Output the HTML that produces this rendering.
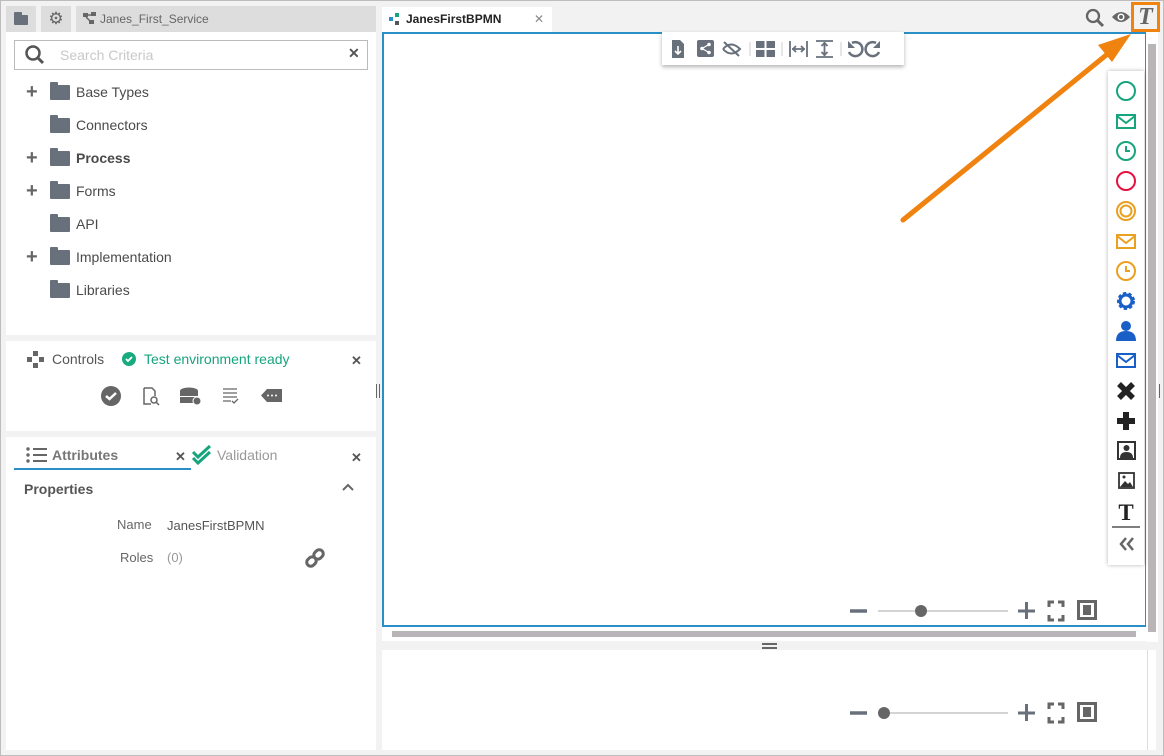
<!DOCTYPE html>
<html><head><style>
*{box-sizing:border-box;margin:0;padding:0}
body{width:1164px;height:756px;background:#f2f2f2;font-family:"Liberation Sans",sans-serif;position:relative;overflow:hidden}
.a{position:absolute}
.w{background:#fff}
.t{color:#555;font-size:14px}
.fold{position:absolute;width:20px;height:15px;background:#68707c;border-radius:1px}
.fold:before{content:"";position:absolute;top:-3px;left:0;width:8px;height:4px;background:#68707c;border-radius:1px 1px 0 0}
.plus{position:absolute;font-size:20px;color:#666;font-weight:bold;line-height:1}
.tree{position:absolute;left:76px;font-size:14px;color:#4a4a4a}
</style></head><body>
<div class="a" style="left:0;top:0;width:1164px;height:756px;border:1px solid #bdbdbd"></div>
<!-- left tabs -->
<div class="a" style="left:6px;top:6px;width:30px;height:26px;background:#ddd"></div>
<div class="fold" style="left:14px;top:15px;width:14px;height:10px"></div>
<div class="a" style="left:41px;top:6px;width:30px;height:26px;background:#ddd;text-align:center;font-size:17px;color:#666;line-height:26px">⚙</div>
<div class="a" style="left:76px;top:6px;width:300px;height:26px;background:#ddd;font-size:12px;color:#666;line-height:26px;padding-left:24px">Janes_First_Service</div>
<svg class="a" style="left:83px;top:12px" width="14" height="14"><rect x="0" y="1" width="5" height="4" fill="#666"/><rect x="8" y="0" width="5" height="4" fill="#666"/><rect x="6" y="8" width="5" height="4" fill="#666"/><path d="M5 3H8M3 5L7 9" stroke="#666" stroke-width="1.5"/></svg>
<!-- tree panel -->
<div class="a w" style="left:6px;top:32px;width:370px;height:303px"></div>
<div class="a" style="left:14px;top:40px;width:354px;height:30px;border:1px solid #bbb;background:#fff"></div>
<svg class="a" style="left:24px;top:44px" width="22" height="22"><circle cx="9" cy="9" r="6.5" fill="none" stroke="#555" stroke-width="2.5"/><path d="M13.5 13.5L19 19" stroke="#555" stroke-width="3"/></svg>
<div class="a" style="left:60px;top:47px;font-size:14px;color:#c8c8c8">Search Criteria</div>
<div class="a" style="left:348px;top:45px;font-size:14px;color:#555;font-weight:bold">✕</div>
<div class="plus" style="left:26px;top:82px">+</div><div class="fold" style="left:50px;top:85px"></div><div class="tree" style="top:84px">Base Types</div>
<div class="fold" style="left:50px;top:118px"></div><div class="tree" style="top:117px">Connectors</div>
<div class="plus" style="left:26px;top:148px">+</div><div class="fold" style="left:50px;top:151px"></div><div class="tree" style="top:150px;font-weight:bold">Process</div>
<div class="plus" style="left:26px;top:181px">+</div><div class="fold" style="left:50px;top:184px"></div><div class="tree" style="top:183px">Forms</div>
<div class="fold" style="left:50px;top:217px"></div><div class="tree" style="top:216px">API</div>
<div class="plus" style="left:26px;top:247px">+</div><div class="fold" style="left:50px;top:250px"></div><div class="tree" style="top:249px">Implementation</div>
<div class="fold" style="left:50px;top:283px"></div><div class="tree" style="top:282px">Libraries</div>
<!-- controls -->
<div class="a w" style="left:6px;top:341px;width:370px;height:90px"></div>
<svg class="a" style="left:27px;top:351px" width="18" height="18"><rect x="6" y="0" width="5" height="5" fill="#666"/><rect x="0" y="6" width="5" height="5" fill="#666"/><rect x="12" y="6" width="5" height="5" fill="#666"/><rect x="6" y="12" width="5" height="5" fill="#666"/></svg>
<div class="a t" style="left:52px;top:351px">Controls</div>
<svg class="a" style="left:122px;top:352px" width="14" height="14"><circle cx="7" cy="7" r="7" fill="#1aaa80"/><path d="M4 7L6 9L10 5" stroke="#fff" stroke-width="1.8" fill="none"/></svg>
<div class="a" style="left:144px;top:351px;font-size:14px;color:#17a57d">Test environment ready</div>
<div class="a" style="left:351px;top:353px;font-size:13px;color:#555;font-weight:bold">✕</div>
<svg class="a" style="left:100px;top:385px" width="190" height="22">
<circle cx="11" cy="11" r="10" fill="#666"/><path d="M6 11L9.5 14L16 8" stroke="#fff" stroke-width="2.5" fill="none"/>
<path d="M44 3h8l3 3v5M44 3v16h7" stroke="#666" stroke-width="1.5" fill="none"/><circle cx="54" cy="15" r="3" stroke="#666" stroke-width="1.5" fill="none"/><path d="M56 17l3 3" stroke="#666" stroke-width="1.5"/>
<ellipse cx="89" cy="6" rx="9" ry="3.5" fill="#666"/><rect x="80" y="6" width="18" height="12" fill="#666"/><path d="M80 11.5h18" stroke="#fff"/><circle cx="97" cy="16" r="4" fill="#666" stroke="#fff"/>
<path d="M123 4h14M123 8h14M123 12h14M123 16h8M132 16l2 2 4-4" stroke="#666" stroke-width="1.3" fill="none"/>
<path d="M167 4h15v13h-15l-6-6.5z" fill="#666"/><circle cx="168" cy="10.5" r="1" fill="#fff"/><circle cx="172" cy="10.5" r="1" fill="#fff"/><circle cx="176" cy="10.5" r="1" fill="#fff"/>
</svg>
<!-- attributes -->
<div class="a w" style="left:6px;top:437px;width:370px;height:313px"></div>
<svg class="a" style="left:26px;top:447px" width="22" height="16"><circle cx="2" cy="2" r="1.7" fill="#666"/><circle cx="2" cy="8" r="1.7" fill="#666"/><circle cx="2" cy="14" r="1.7" fill="#666"/><path d="M7 2h14M7 8h14M7 14h14" stroke="#666" stroke-width="2"/></svg>
<div class="a" style="left:52px;top:447px;font-size:14px;color:#777;font-weight:bold">Attributes</div>
<div class="a" style="left:175px;top:449px;font-size:13px;color:#555;font-weight:bold">✕</div>
<div class="a" style="left:14px;top:468px;width:177px;height:2px;background:#2a8fc7"></div>
<svg class="a" style="left:191px;top:444px" width="22" height="22"><path d="M2 8l5 5 12-11M2 14l5 5 12-11" stroke="#17a57d" stroke-width="3" fill="none"/></svg>
<div class="a" style="left:217px;top:447px;font-size:14px;color:#999">Validation</div>
<div class="a" style="left:351px;top:450px;font-size:13px;color:#555;font-weight:bold">✕</div>
<div class="a" style="left:24px;top:481px;font-size:14px;color:#555;font-weight:bold">Properties</div>
<svg class="a" style="left:341px;top:482px" width="14" height="10"><path d="M2 8l5-5 5 5" stroke="#666" stroke-width="2" fill="none"/></svg>
<div class="a" style="left:117px;top:517px;font-size:13px;color:#666">Name</div>
<div class="a" style="left:167px;top:518px;font-size:13px;color:#555">JanesFirstBPMN</div>
<div class="a" style="left:120px;top:550px;font-size:13px;color:#666">Roles</div>
<div class="a" style="left:167px;top:550px;font-size:13px;color:#999">(0)</div>
<svg class="a" style="left:304px;top:547px" width="22" height="22"><g transform="rotate(-45 11 11)" stroke="#666" stroke-width="3" fill="none"><rect x="1" y="7" width="10" height="8" rx="4"/><rect x="11" y="7" width="10" height="8" rx="4"/></g></svg>
<!-- splitters -->
<div class="a" style="left:376px;top:384px;width:4px;height:14px;border-left:1.5px solid #666;border-right:1.5px solid #666"></div>
<div class="a" style="left:1156px;top:384px;width:4px;height:14px;border-left:1.5px solid #666;border-right:1.5px solid #666"></div>
<!-- main tab -->
<div class="a w" style="left:382px;top:7px;width:170px;height:25px"></div>
<svg class="a" style="left:389px;top:13px" width="12" height="12"><rect x="0" y="4" width="4" height="4" fill="#2a8fc7"/><rect x="6" y="0" width="4" height="4" fill="#17a57d"/><rect x="6" y="8" width="4" height="4" fill="#555"/></svg>
<div class="a" style="left:406px;top:12px;font-size:12px;font-weight:bold;color:#222">JanesFirstBPMN</div>
<div class="a" style="left:534px;top:12px;font-size:12px;color:#888">✕</div>
<!-- top-right icons -->
<svg class="a" style="left:1085px;top:8px" width="20" height="20"><circle cx="8" cy="8" r="6" fill="none" stroke="#666" stroke-width="2.3"/><path d="M12 12l6 6" stroke="#666" stroke-width="3"/></svg>
<svg class="a" style="left:1111px;top:10px" width="20" height="14"><path d="M1 7Q10 -3 19 7Q10 17 1 7z" fill="#666"/><circle cx="10" cy="7" r="3.5" fill="#fff"/><circle cx="10" cy="7" r="2" fill="#666"/></svg>
<div class="a" style="left:1131px;top:2px;width:29px;height:30px;border:3px solid #f0820f;background:#f2f2f2;font-family:'Liberation Serif',serif;font-style:italic;font-weight:bold;font-size:24px;color:#666;text-align:center;line-height:24px">T</div>
<!-- canvas -->
<div class="a w" style="left:382px;top:32px;width:765px;height:595px;border:2px solid #2a8fc7"></div>
<div class="a w" style="left:382px;top:627px;width:774px;height:14px"></div>
<div class="a w" style="left:1146px;top:32px;width:12px;height:610px"></div>
<div class="a" style="left:1148px;top:44px;width:8px;height:588px;background:#b9b4b8"></div>
<div class="a" style="left:392px;top:631px;width:744px;height:6px;background:#b9b4b8"></div>
<!-- toolbar -->
<div class="a w" style="left:662px;top:32px;width:242px;height:33px;box-shadow:0 2px 4px rgba(0,0,0,.3)"></div>
<svg class="a" style="left:668px;top:38px" width="232" height="22" fill="#68707c" stroke="#68707c">
<path d="M4 2h8l4 4v14H4z" stroke="none"/><path d="M10 8v8M7 13l3 3 3-3" stroke="#fff" stroke-width="1.6" fill="none"/>
<rect x="29" y="2" width="17" height="17" rx="2" stroke="none"/><circle cx="34" cy="10.5" r="1.8" fill="#fff" stroke="none"/><circle cx="41" cy="6.5" r="1.8" fill="#fff" stroke="none"/><circle cx="41" cy="14.5" r="1.8" fill="#fff" stroke="none"/><path d="M34 10.5l7-4M34 10.5l7 4" stroke="#fff" stroke-width="1.2"/>
<path d="M55 11Q63 2 72 11Q63 20 55 11M56 4l15 14" stroke-width="2" fill="none"/>
<path d="M82 4v14" stroke="#ccc"/>
<rect x="88" y="3" width="8.5" height="7" stroke="none"/><rect x="98.5" y="3" width="8.5" height="7" stroke="none"/><rect x="88" y="12" width="8.5" height="7" stroke="none"/><rect x="98.5" y="12" width="8.5" height="7" stroke="none"/>
<path d="M114 4v14" stroke="#ccc"/>
<path d="M122 3v16M139 3v16M124 11h13M125 11l3-3M125 11l3 3M136 11l-3-3M136 11l-3 3" stroke-width="1.8" fill="none"/>
<path d="M148 3h17M148 19h17M156.5 4v14M156.5 5l-3 3M156.5 5l3 3M156.5 17l-3-3M156.5 17l3-3" stroke-width="1.8" fill="none"/>
<path d="M173 4v14" stroke="#ccc"/>
<path d="M184 5A7 7 0 1 1 181 14" stroke-width="2.5" fill="none"/><path d="M180 3v7h7z" stroke="none"/>
<path d="M208 5A7 7 0 1 0 211 14" stroke-width="2.5" fill="none"/><path d="M212 3v7h-7z" stroke="none"/>
</svg>
<!-- palette -->
<div class="a w" style="left:1108px;top:71px;width:36px;height:494px;box-shadow:0 0 4px rgba(0,0,0,.3)"></div>
<svg class="a" style="left:1108px;top:71px" width="36" height="494">
<circle cx="18" cy="20" r="9" fill="none" stroke="#17a57d" stroke-width="2"/>
<rect x="9" y="44" width="18" height="13" fill="none" stroke="#17a57d" stroke-width="2"/><path d="M9 45l9 7 9-7" fill="none" stroke="#17a57d" stroke-width="2"/>
<circle cx="18" cy="80" r="9" fill="none" stroke="#17a57d" stroke-width="2"/><path d="M18 75v5h4" fill="none" stroke="#17a57d" stroke-width="2"/>
<circle cx="18" cy="110" r="9" fill="none" stroke="#e8103f" stroke-width="2"/>
<circle cx="18" cy="140" r="9" fill="none" stroke="#eaa020" stroke-width="2"/><circle cx="18" cy="140" r="5.5" fill="none" stroke="#eaa020" stroke-width="2"/>
<rect x="9" y="164" width="18" height="13" fill="none" stroke="#eaa020" stroke-width="2"/><path d="M9 165l9 7 9-7" fill="none" stroke="#eaa020" stroke-width="2"/>
<circle cx="18" cy="200" r="9" fill="none" stroke="#eaa020" stroke-width="2"/><path d="M18 195v5h4" fill="none" stroke="#eaa020" stroke-width="2"/>
<circle cx="18" cy="230" r="7" fill="none" stroke="#1a5fc7" stroke-width="4" stroke-dasharray="3 2"/><circle cx="18" cy="230" r="6" fill="none" stroke="#1a5fc7" stroke-width="3"/>
<circle cx="18" cy="255" r="5" fill="#1a5fc7"/><path d="M8 270Q8 260 18 260Q28 260 28 270z" fill="#1a5fc7"/>
<rect x="9" y="283" width="18" height="13" fill="none" stroke="#1a5fc7" stroke-width="2"/><path d="M9 284l9 7 9-7" fill="none" stroke="#1a5fc7" stroke-width="2"/>
<path d="M11 313l14 14M25 313l-14 14" stroke="#222" stroke-width="5.5"/>
<path d="M18 341v18M9 350h18" stroke="#222" stroke-width="6"/>
<rect x="10" y="371" width="17" height="17" fill="none" stroke="#333" stroke-width="2"/><circle cx="18.5" cy="377" r="3" fill="#333"/><path d="M12 387q0-6 6.5-6t6.5 6z" fill="#333"/>
<rect x="11" y="402" width="15" height="15" fill="none" stroke="#333" stroke-width="1.8"/><path d="M12 416l5-6 3 3 2-2 3 5z" fill="#333"/><circle cx="16" cy="406" r="1.5" fill="#333"/>
<text x="18" y="449" text-anchor="middle" font-family="Liberation Serif" font-weight="bold" font-size="23" fill="#222">T</text>
<path d="M4 456h28" stroke="#555" stroke-width="1.5"/>
<path d="M18 467l-5 6 5 6M25 467l-5 6 5 6" fill="none" stroke="#666" stroke-width="2.5"/>
</svg>
<!-- zoom controls -->
<svg class="a" style="left:848px;top:598px" width="252" height="26">
<path d="M2 13h17" stroke="#68707c" stroke-width="3.5"/><path d="M30 13h130" stroke="#aaa"/><ellipse cx="73" cy="13" rx="6" ry="6" fill="#666"/>
<path d="M170 13h17M178.5 4v17" stroke="#68707c" stroke-width="3"/>
<path d="M201 9V4h5M210 4h5v5M215 17v5h-5M206 22h-5v-5" stroke="#666" stroke-width="3" fill="none"/>
<rect x="229" y="2" width="20" height="20" fill="#666"/><rect x="232" y="5" width="14" height="14" fill="#fff"/><rect x="235" y="7" width="8" height="10" fill="#666"/>
</svg>
<div class="a" style="left:762px;top:643px;width:15px;height:6px;border-top:2px solid #666;border-bottom:2px solid #666"></div>
<div class="a w" style="left:382px;top:650px;width:774px;height:100px"></div>
<div class="a" style="left:1147px;top:650px;width:1px;height:100px;background:#ddd"></div>
<svg class="a" style="left:848px;top:700px" width="252" height="26">
<path d="M2 13h17" stroke="#68707c" stroke-width="3.5"/><path d="M30 13h130" stroke="#aaa"/><ellipse cx="36" cy="13" rx="6" ry="6" fill="#666"/>
<path d="M170 13h17M178.5 4v17" stroke="#68707c" stroke-width="3"/>
<path d="M201 9V4h5M210 4h5v5M215 17v5h-5M206 22h-5v-5" stroke="#666" stroke-width="3" fill="none"/>
<rect x="229" y="2" width="20" height="20" fill="#666"/><rect x="232" y="5" width="14" height="14" fill="#fff"/><rect x="235" y="7" width="8" height="10" fill="#666"/>
</svg>
<!-- arrow -->
<svg class="a" style="left:0;top:0" width="1164" height="756"><path d="M903 220L1110 52" stroke="#f0820f" stroke-width="5" stroke-linecap="round"/><path d="M1131 34L1098 45L1112 62z" fill="#f0820f"/></svg>
</body></html>
